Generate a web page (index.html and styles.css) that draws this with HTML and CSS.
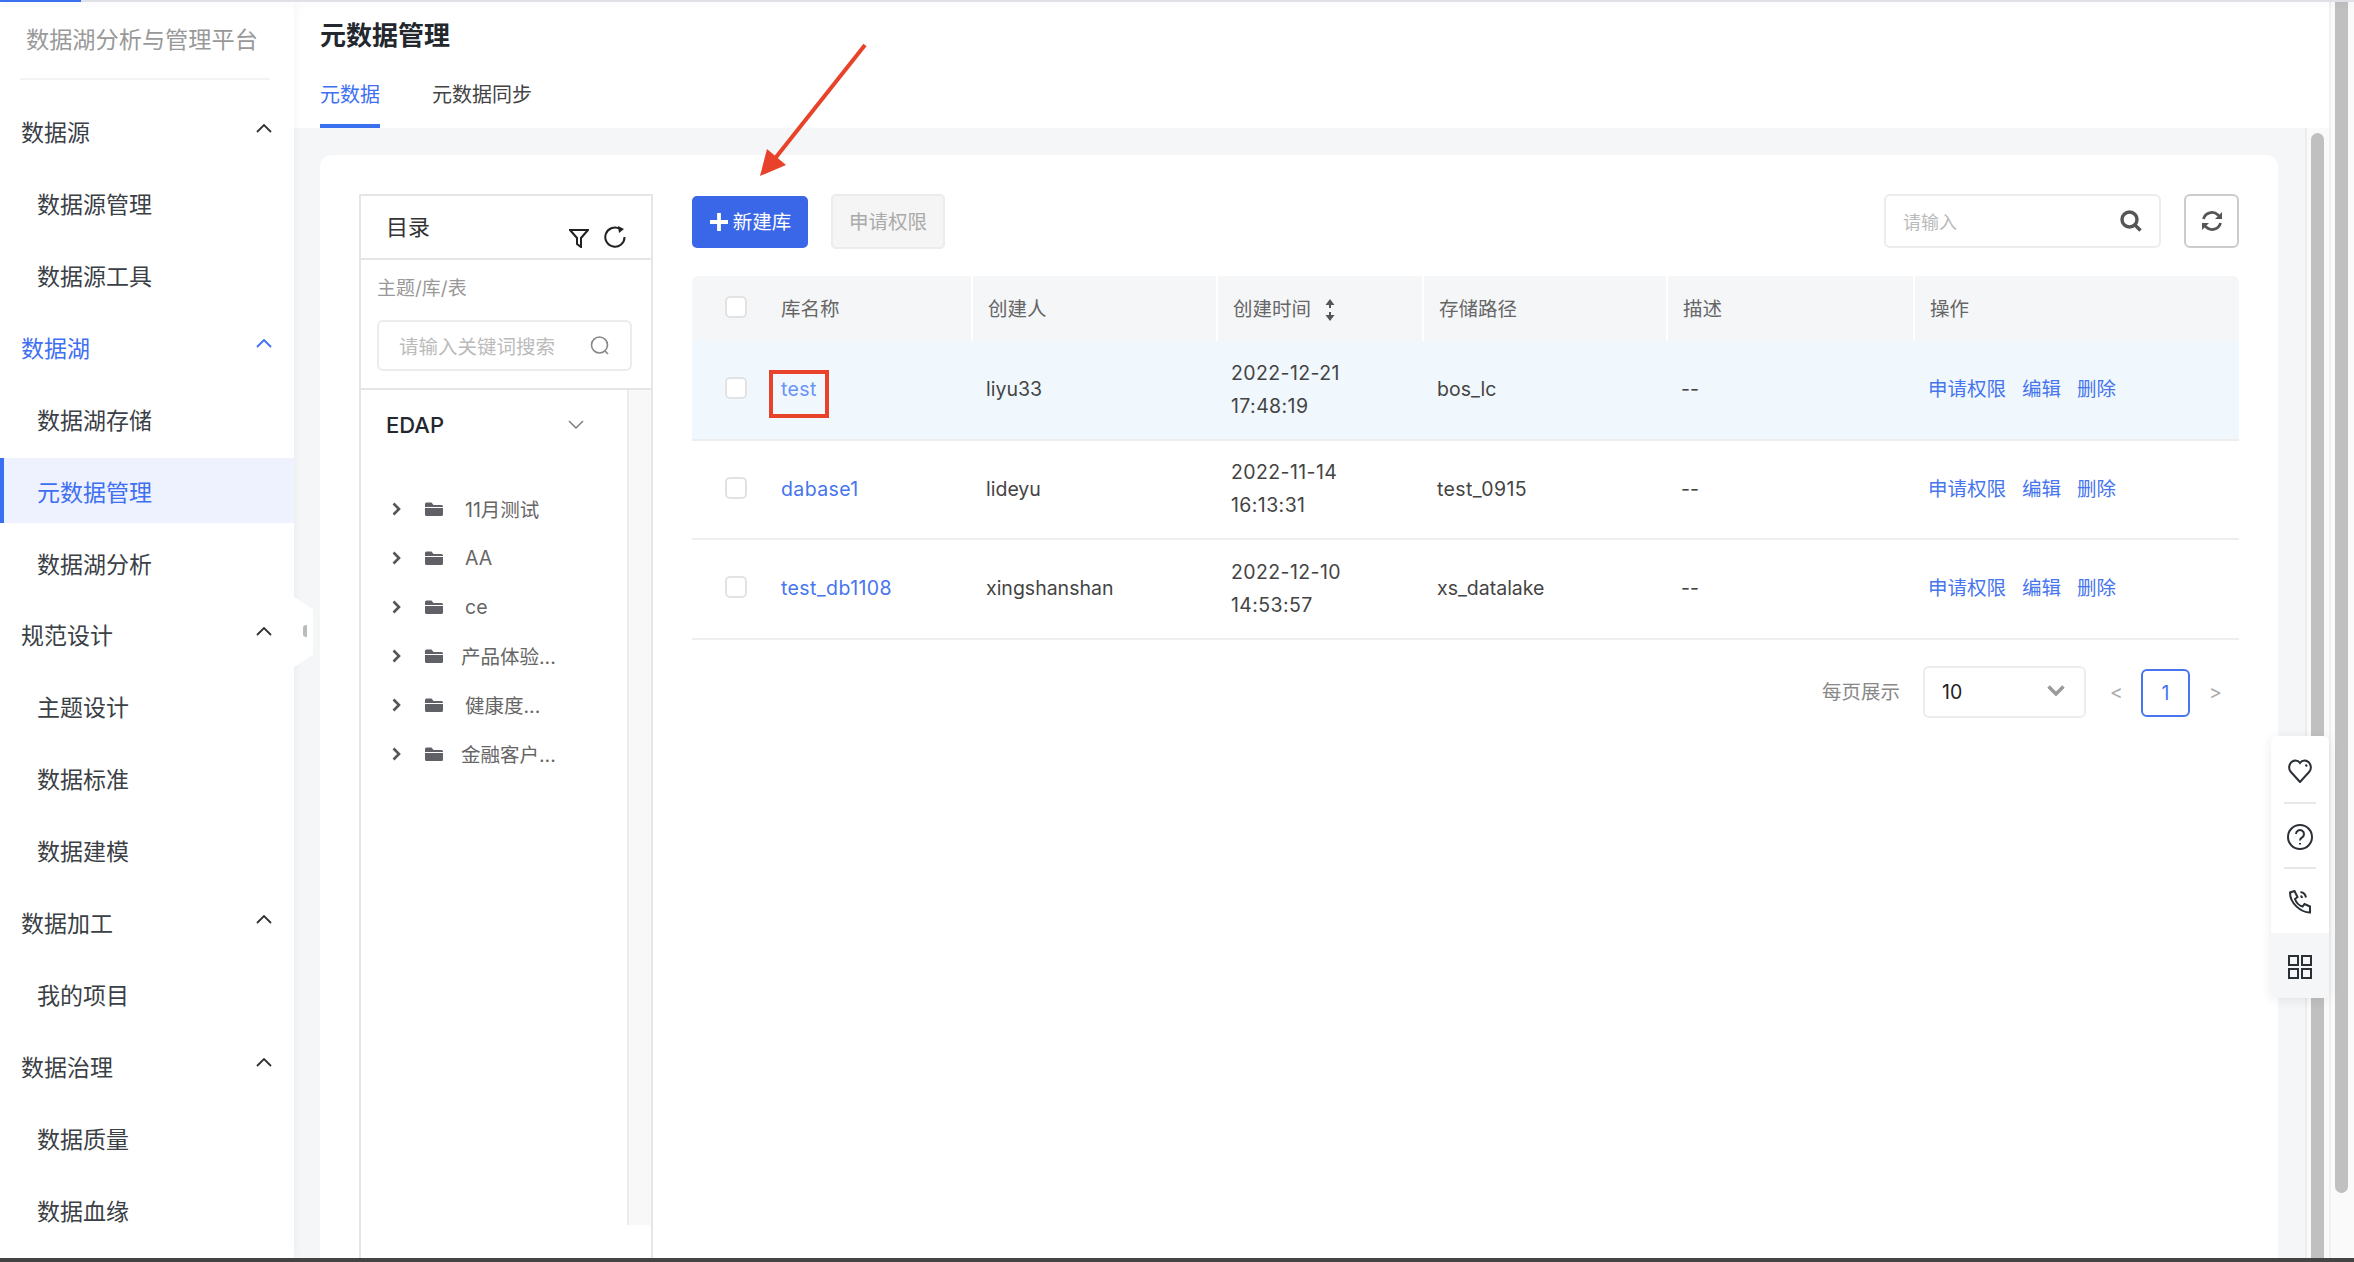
FILE: index.html
```html
<!DOCTYPE html>
<html lang="zh-CN">
<head>
    <meta charset="UTF-8">
    <title>元数据管理</title>
    <link rel="stylesheet" href="styles.css">
</head>
<body>
    <div class="topline"><div class="topline-progress"></div></div>
    <div class="shell">
        <aside class="sidebar">
            <div class="brand"><span>数据湖分析与管理平台</span></div>
            <nav class="nav">
                <div class="nav-group">数据源<svg class="nav-arrow" viewBox="0 0 16 9"><path d="M1 8 8 1l7 7"/></svg></div>
                <div class="nav-item">数据源管理</div>
                <div class="nav-item">数据源工具</div>
                <div class="nav-group nav-group-open">数据湖<svg class="nav-arrow" viewBox="0 0 16 9"><path d="M1 8 8 1l7 7"/></svg></div>
                <div class="nav-item">数据湖存储</div>
                <div class="nav-item nav-item-active">元数据管理</div>
                <div class="nav-item">数据湖分析</div>
                <div class="nav-group">规范设计<svg class="nav-arrow" viewBox="0 0 16 9"><path d="M1 8 8 1l7 7"/></svg></div>
                <div class="nav-item">主题设计</div>
                <div class="nav-item">数据标准</div>
                <div class="nav-item">数据建模</div>
                <div class="nav-group">数据加工<svg class="nav-arrow" viewBox="0 0 16 9"><path d="M1 8 8 1l7 7"/></svg></div>
                <div class="nav-item">我的项目</div>
                <div class="nav-group">数据治理<svg class="nav-arrow" viewBox="0 0 16 9"><path d="M1 8 8 1l7 7"/></svg></div>
                <div class="nav-item">数据质量</div>
                <div class="nav-item">数据血缘</div>
            </nav>
            <div class="collapse-handle"><span class="collapse-mark"></span></div>
        </aside>

        <main class="main">
            <header class="page-header">
                <h1 class="page-title">元数据管理</h1>
                <div class="tabs">
                    <div class="tab tab-active">元数据</div>
                    <div class="tab">元数据同步</div>
                </div>
            </header>
            <div class="page-body">
                <div class="content">
                    <div class="card">
                        <section class="tree-panel">
                            <div class="tree-head">
                                <span class="tree-title">目录</span>
                                <svg class="icon-filter" viewBox="0 0 20 20"><path d="M1 2h18l-7 8v9l-4-3v-6z"/></svg>
                                <svg class="icon-reload" viewBox="0 0 22 23"><path d="M16 4a9.6 9.6 0 1 0 4.5 8"/><path class="icon-solid" d="M14 1l6 3-5 4z"/></svg>
                            </div>
                            <div class="tree-search">
                                <div class="tree-search-label">主题/库/表</div>
                                <div class="tree-input">
                                    <span>请输入关键词搜索</span>
                                    <svg viewBox="0 0 20 20"><circle cx="9.5" cy="9" r="8"/><path d="M15 15l3 3"/></svg>
                                </div>
                            </div>
                            <div class="tree-body">
                                <div class="tree-list">
                                    <div class="tree-root">
                                        <span>EDAP</span>
                                        <svg viewBox="0 0 16 9"><path d="M1 1l7 7 7-7"/></svg>
                                    </div>
                                    <div class="tree-node">
                                        <svg class="tree-arrow" viewBox="0 0 9 14"><path d="M1.5 1.5 7 7l-5.500 5.500"/></svg>
                                        <svg class="tree-folder" viewBox="0 0 18 14"><path d="M0 2a1.500 1.500 0 0 1 1.500-1.500h5L8.500 3H16.500A1.500 1.500 0 0 1 18 4.500V5H0zM0 6h18v6.500a1.500 1.500 0 0 1-1.500 1.500h-15A1.500 1.500 0 0 1 0 12.500z"/></svg>
                                        <span class="tree-label">11月测试</span>
                                    </div>
                                    <div class="tree-node">
                                        <svg class="tree-arrow" viewBox="0 0 9 14"><path d="M1.5 1.5 7 7l-5.500 5.500"/></svg>
                                        <svg class="tree-folder" viewBox="0 0 18 14"><path d="M0 2a1.500 1.500 0 0 1 1.500-1.500h5L8.500 3H16.500A1.500 1.500 0 0 1 18 4.500V5H0zM0 6h18v6.500a1.500 1.500 0 0 1-1.500 1.500h-15A1.500 1.500 0 0 1 0 12.500z"/></svg>
                                        <span class="tree-label">AA</span>
                                    </div>
                                    <div class="tree-node">
                                        <svg class="tree-arrow" viewBox="0 0 9 14"><path d="M1.5 1.5 7 7l-5.500 5.500"/></svg>
                                        <svg class="tree-folder" viewBox="0 0 18 14"><path d="M0 2a1.500 1.500 0 0 1 1.500-1.500h5L8.500 3H16.500A1.500 1.500 0 0 1 18 4.500V5H0zM0 6h18v6.500a1.500 1.500 0 0 1-1.500 1.500h-15A1.500 1.500 0 0 1 0 12.500z"/></svg>
                                        <span class="tree-label">ce</span>
                                    </div>
                                    <div class="tree-node">
                                        <svg class="tree-arrow" viewBox="0 0 9 14"><path d="M1.5 1.5 7 7l-5.500 5.500"/></svg>
                                        <svg class="tree-folder" viewBox="0 0 18 14"><path d="M0 2a1.500 1.500 0 0 1 1.500-1.500h5L8.500 3H16.500A1.500 1.500 0 0 1 18 4.500V5H0zM0 6h18v6.500a1.500 1.500 0 0 1-1.500 1.500h-15A1.500 1.500 0 0 1 0 12.500z"/></svg>
                                        <span class="tree-label tree-label-long">产品体验...</span>
                                    </div>
                                    <div class="tree-node">
                                        <svg class="tree-arrow" viewBox="0 0 9 14"><path d="M1.5 1.5 7 7l-5.500 5.500"/></svg>
                                        <svg class="tree-folder" viewBox="0 0 18 14"><path d="M0 2a1.500 1.500 0 0 1 1.500-1.500h5L8.500 3H16.500A1.500 1.500 0 0 1 18 4.500V5H0zM0 6h18v6.500a1.500 1.500 0 0 1-1.500 1.500h-15A1.500 1.500 0 0 1 0 12.500z"/></svg>
                                        <span class="tree-label">健康度...</span>
                                    </div>
                                    <div class="tree-node">
                                        <svg class="tree-arrow" viewBox="0 0 9 14"><path d="M1.5 1.5 7 7l-5.500 5.500"/></svg>
                                        <svg class="tree-folder" viewBox="0 0 18 14"><path d="M0 2a1.500 1.500 0 0 1 1.500-1.500h5L8.500 3H16.500A1.500 1.500 0 0 1 18 4.500V5H0zM0 6h18v6.500a1.500 1.500 0 0 1-1.500 1.500h-15A1.500 1.500 0 0 1 0 12.500z"/></svg>
                                        <span class="tree-label tree-label-long">金融客户...</span>
                                    </div>
                                </div>
                                <div class="tree-gutter"></div>
                            </div>
                        </section>

                        <section class="db-panel">
                            <div class="toolbar">
                                <button class="btn btn-primary"><svg viewBox="0 0 20 20"><path d="M10 1v18M1 10h18"/></svg>新建库</button>
                                <button class="btn btn-disabled">申请权限</button>
                                <div class="search-box">
                                    <span>请输入</span>
                                    <svg viewBox="0 0 22 22"><circle cx="9.500" cy="9.500" r="7.500"/><path d="M15 15l5.500 5.500"/></svg>
                                </div>
                                <button class="btn-refresh">
                                    <svg viewBox="0 0 22 22"><path d="M2.500 9A8.700 8.700 0 0 1 17 5l2 2.500"/><path d="M19.500 13A8.700 8.700 0 0 1 5 17l-2-2.500"/><path class="icon-solid" d="M21 2v7h-7zM1 20v-7h7z"/></svg>
                                </button>
                            </div>
                            <table class="db-table">
                                <colgroup>
                                    <col class="col-name"><col class="col-owner"><col class="col-time"><col class="col-path"><col class="col-desc"><col class="col-ops">
                                </colgroup>
                                <thead>
                                    <tr>
                                        <th><span class="name-cell"><span class="checkbox"></span>库名称</span></th>
                                        <th>创建人</th>
                                        <th>创建时间<svg class="sort-icon" viewBox="0 0 10 22"><path d="M5 2v7M5 13v7"/><path class="icon-solid" d="M5 0l4.500 6h-9zM5 22l4.500-6h-9z"/></svg></th>
                                        <th>存储路径</th>
                                        <th>描述</th>
                                        <th>操作</th>
                                    </tr>
                                </thead>
                                <tbody>
                                    <tr class="row-hover">
                                        <td><span class="name-cell"><span class="checkbox"></span><a class="link wide-text">test</a></span></td>
                                        <td>liyu33</td>
                                        <td class="wide-text">2022-12-21<br>17:48:19</td>
                                        <td>bos_lc</td>
                                        <td>--</td>
                                        <td><span class="ops"><a class="link">申请权限</a><a class="link">编辑</a><a class="link">删除</a></span></td>
                                    </tr>
                                    <tr>
                                        <td><span class="name-cell"><span class="checkbox"></span><a class="link wide-text">dabase1</a></span></td>
                                        <td>lideyu</td>
                                        <td class="wide-text">2022-11-14<br>16:13:31</td>
                                        <td class="wide-text">test_0915</td>
                                        <td>--</td>
                                        <td><span class="ops"><a class="link">申请权限</a><a class="link">编辑</a><a class="link">删除</a></span></td>
                                    </tr>
                                    <tr>
                                        <td><span class="name-cell"><span class="checkbox"></span><a class="link wide-text">test_db1108</a></span></td>
                                        <td>xingshanshan</td>
                                        <td class="wide-text">2022-12-10<br>14:53:57</td>
                                        <td>xs_datalake</td>
                                        <td>--</td>
                                        <td><span class="ops"><a class="link">申请权限</a><a class="link">编辑</a><a class="link">删除</a></span></td>
                                    </tr>
                                </tbody>
                            </table>
                            <div class="pager">
                                <span class="pager-label">每页展示</span>
                                <div class="pager-select">
                                    <span>10</span>
                                    <svg viewBox="0 0 18 11"><path d="M1.500 1.500 9 9l7.500-7.500"/></svg>
                                </div>
                                <span class="pager-arrow">&lt;</span>
                                <span class="pager-page">1</span>
                                <span class="pager-arrow">&gt;</span>
                            </div>
                        </section>
                    </div>
                </div>
                <div class="scroll-gutter"><div class="scroll-thumb"></div></div>
            </div>

            <div class="float-bar">
                <div class="float-item">
                    <svg viewBox="0 0 24 24"><path d="M12 23 2.500 12.500C-.500 8.500 2 1.500 7.500 1.500c2 0 3.500 1 4.500 2.500 1-1.500 2.500-2.500 4.500-2.500 5.500 0 8 7 5 11z"/><path d="M17.500 5.500l1.500 2"/></svg>
                </div>
                <div class="float-item">
                    <svg class="icon-help" viewBox="0 0 26 26"><circle cx="13" cy="13" r="12"/><path d="M9 10a4 4 0 1 1 6 3.500c-1.300.7-2 1.500-2 3"/><path d="M13 19v1.500"/></svg>
                </div>
                <div class="float-item">
                    <svg viewBox="0 0 24 24"><path d="M2 2.500 6.500 1l3 6-2.500 2c1 3 4 6.500 7.500 7.500l2-2.500 5.500 2.500v6c-9 0-20-9-20-20z"/><path d="M12.500 2c3 .5 5 2.500 5.500 5.500"/><path d="M12.500 6c1 .3 1.500 1 1.800 1.800"/></svg>
                </div>
                <div class="float-item float-item-active">
                    <svg viewBox="0 0 24 24"><path d="M1 1h9v9H1zM14 1h9v9h-9zM1 14h9v9H1zM14 14h9v9h-9z"/></svg>
                </div>
            </div>

            <!-- annotations drawn on top of the screenshot -->
            <svg class="note-arrow" viewBox="0 0 110 135">
                <path d="M106 2 14 118" class="note-line"/>
                <path d="M1 133 8 106 27 122z" class="note-head"/>
            </svg>
            <div class="note-box"></div>
        </main>

        <div class="window-scroll"><div class="window-thumb"></div></div>
    </div>
    <div class="bottom-bar"></div>
</body>
</html>
```

FILE: styles.css
```css
* {
    box-sizing: border-box;
}
body {
    margin: 0;
    height: 1262px;
    overflow: hidden;
    display: flex;
    flex-direction: column;
    font-family: Inter, "Noto Sans CJK SC", sans-serif;
    font-size: 19.5px;
    color: #333;
    background-color: #fff;
}
svg {
    display: block;
    flex: none;
    fill: none;
}
.icon-solid {
    stroke: none !important;
    fill: currentColor;
}

.topline {
    height: 2px;
    background-color: #dfe1e4;
    box-shadow: 0 2px 8px rgba(0,0,0,0.08);
    position: relative;
    z-index: 3;
}
.topline-progress {
    width: 81px;
    height: 2px;
    background-color: #3a6ff0;
}
.bottom-bar {
    height: 4px;
    background-color: #444;
}
.shell {
    flex: 1;
    display: flex;
    min-height: 0;
}

/* sidebar */
.sidebar {
    width: 294px;
    flex: none;
    position: relative;
    z-index: 2;
    background-color: #fff;
    box-shadow: 0 0 10px rgba(0,0,0,0.05);
}
.brand {
    height: 78px;
    margin: 0 24px 0 20px;
    padding: 22px 0 0 6px;
    font-size: 23.2px;
    line-height: 32px;
    color: #999;
    border-bottom: 2px solid #f3f3f3;
    white-space: nowrap;
}
.nav {
    padding-top: 18.500px;
}
.nav-group,
.nav-item {
    height: 65px;
    margin-bottom: 6.930px;
    display: flex;
    align-items: center;
    font-size: 23px;
    color: #3b3f46;
}
.nav-group {
    padding: 0 22px 0 21px;
    justify-content: space-between;
}
.nav-item {
    padding-left: 37px;
}
.nav-arrow {
    width: 16px;
    height: 9px;
    margin-top: -6px;
    stroke: #333;
    stroke-width: 1.800;
}
.nav-group-open {
    color: #3f6ff2;
}
.nav-group-open .nav-arrow {
    stroke: #3f6ff2;
}
.nav-item-active {
    color: #3f6ff2;
    background-color: #eef2fe;
    border-left: 4px solid #3a6ff0;
    padding-left: 33px;
}
.collapse-handle {
    position: absolute;
    left: 100%;
    top: 595px;
    width: 19px;
    height: 70px;
    background-color: #fff;
    clip-path: polygon(0 0, 100% 12px, 100% 58px, 0 100%);
}
.collapse-mark {
    position: absolute;
    left: 9px;
    top: 28px;
    width: 4px;
    height: 12px;
    background-color: #bbb;
    border-radius: 3px 0 0 3px;
}

/* main column */
.main {
    flex: 1;
    min-width: 0;
    display: flex;
    flex-direction: column;
    position: relative;
}
.page-header {
    height: 126px;
    padding-left: 26px;
    background-color: #fff;
}
.page-title {
    margin: 0;
    padding-top: 15px;
    font-size: 26px;
    line-height: 38px;
    font-weight: 600;
    color: #23272e;
}
.tabs {
    display: flex;
    gap: 52px;
    margin-top: 18px;
}
.tab {
    height: 55px;
    padding-top: 8px;
    font-size: 20px;
    line-height: 28px;
    color: #444;
}
.tab-active {
    color: #3f6ff2;
    border-bottom: 4px solid #3a6ff0;
}
.page-body {
    flex: 1;
    min-height: 0;
    display: flex;
}
.content {
    flex: 1;
    min-width: 0;
    padding: 27px 27px 0 26px;
    background-color: #f5f6f8;
}
.scroll-gutter {
    width: 24px;
    flex: none;
    padding: 5px 5px 0 4px;
    background-color: #fafafa;
    border-left: 2px solid #ececec;
    overflow: hidden;
}
.scroll-thumb {
    width: 13px;
    height: 1200px;
    background-color: #c0c0c0;
    border-radius: 7px;
}
.window-scroll {
    width: 25px;
    flex: none;
    padding-left: 4px;
    background-color: #fafafa;
    border-left: 2px solid #f0f0f0;
}
.window-thumb {
    width: 13px;
    height: 1191px;
    background-color: #c0c0c0;
    border-radius: 0 0 7px 7px;
}
.card {
    height: 100%;
    display: flex;
    gap: 39px;
    padding: 39px 39px 0 39px;
    background-color: #fff;
    border-radius: 12px 12px 0 0;
}

/* directory tree */
.tree-panel {
    width: 294px;
    flex: none;
    display: flex;
    flex-direction: column;
    border: 2px solid #e6e6e6;
    border-bottom: none;
}
.tree-head {
    height: 64px;
    flex: none;
    display: flex;
    align-items: flex-start;
    padding: 15.500px 25px 0 25px;
    border-bottom: 2px solid #e6e6e6;
}
.tree-title {
    flex: 1;
    font-size: 22px;
    line-height: 30px;
    color: #333;
}
.icon-filter {
    width: 20px;
    height: 20px;
    margin-top: 16px;
    stroke: #222;
    stroke-width: 2;
}
.icon-reload {
    width: 22px;
    height: 23px;
    margin: 13px 0 0 15px;
    color: #222;
    stroke: #222;
    stroke-width: 2;
}
.tree-search {
    height: 130px;
    flex: none;
    padding: 15px 19px 0 16px;
    border-bottom: 2px solid #e6e6e6;
}
.tree-search-label {
    font-size: 19px;
    line-height: 28px;
    color: #999;
}
.tree-input {
    height: 51px;
    margin-top: 17px;
    display: flex;
    align-items: center;
    justify-content: space-between;
    padding: 0 20px 0 20px;
    font-size: 19.500px;
    color: #bbb;
    border: 2px solid #ececec;
    border-radius: 6px;
}
.tree-input svg {
    width: 20px;
    height: 20px;
    stroke: #888;
    stroke-width: 1.600;
}
.tree-body {
    flex: 1;
    min-height: 0;
    display: flex;
}
.tree-list {
    flex: 1;
    min-width: 0;
    padding-left: 25px;
}
.tree-root {
    height: 69px;
    display: flex;
    align-items: center;
    justify-content: space-between;
    padding-right: 43px;
    font-size: 22px;
    font-weight: 500;
    color: #23272e;
}
.tree-root svg {
    width: 16px;
    height: 9px;
    stroke: #777;
    stroke-width: 1.400;
}
.tree-node {
    height: 49px;
    display: flex;
    align-items: center;
    font-size: 19.500px;
    color: #666;
}
.tree-root + .tree-node {
    margin-top: 25px;
}
.tree-arrow {
    width: 9px;
    height: 14px;
    margin-left: 6px;
    stroke: #555;
    stroke-width: 2.600;
}
.tree-folder {
    width: 18px;
    height: 14px;
    margin-left: 24px;
    fill: #5f6166;
}
.tree-label {
    margin-left: 22px;
}
.tree-label-long {
    margin-left: 18px;
}
.tree-gutter {
    width: 24px;
    flex: none;
    height: 835px;
    background-color: #f8f8f8;
    border-left: 2px solid #ececec;
}

/* database table */
.db-panel {
    flex: 1;
    min-width: 0;
}
.toolbar {
    height: 82px;
    display: flex;
    align-items: flex-start;
}
.btn {
    height: 52px;
    margin-top: 2px;
    padding: 0 0 3px;
    display: flex;
    align-items: center;
    justify-content: center;
    font: inherit;
    border-radius: 5px;
    border: none;
}
.btn-primary {
    width: 116px;
    gap: 4px;
    color: #fff;
    background-color: #3a66e8;
}
.btn-primary svg {
    width: 20px;
    height: 20px;
    margin-top: 2px;
    stroke: #fff;
    stroke-width: 3.800;
}
.btn-disabled {
    width: 114px;
    height: 55px;
    margin: 0 0 0 23px;
    color: #aaa;
    background-color: #f5f5f5;
    border: 2px solid #ececec;
}
.search-box {
    width: 277px;
    height: 54px;
    margin-left: auto;
    display: flex;
    align-items: center;
    justify-content: space-between;
    padding: 0 17px 0 17px;
    font-size: 18px;
    color: #bbb;
    border: 2px solid #ececec;
    border-radius: 6px;
}
.search-box svg {
    width: 22px;
    height: 22px;
    stroke: #555;
    stroke-width: 3.400;
}
.btn-refresh {
    width: 55px;
    height: 54px;
    margin-left: 23px;
    display: flex;
    align-items: center;
    justify-content: center;
    background-color: #fff;
    border: 2px solid #ccc;
    border-radius: 6px;
}
.btn-refresh svg {
    width: 22px;
    height: 22px;
    color: #555;
    stroke: #555;
    stroke-width: 2.800;
}
.db-table {
    width: 100%;
    table-layout: fixed;
    border-collapse: separate;
    border-spacing: 0;
}
.col-name { width: 279px; }
.col-owner { width: 245px; }
.col-time { width: 206px; }
.col-path { width: 244px; }
.col-desc { width: 247px; }
.col-ops { width: 326px; }
.db-table th {
    height: 65px;
    padding: 0 0 3px 15px;
    text-align: left;
    font-weight: 400;
    color: #666;
    background-color: #f5f6f8;
    border-left: 2px solid #fff;
}
.db-table th:first-child {
    padding-left: 33px;
    border-left: none;
    border-radius: 6px 0 0 0;
}
.db-table th:last-child {
    border-radius: 0 6px 0 0;
}
.db-table td {
    height: 99.500px;
    padding: 0 0 0 15px;
    line-height: 33px;
    color: #444;
    border-bottom: 2px solid #eeeeee;
}
.db-table td:first-child {
    padding-left: 33px;
}
.db-table td.wide-text,
.wide-text {
    letter-spacing: 0.4px;
}
.row-hover td {
    background-color: #f1f8fd;
}
.name-cell {
    display: flex;
    align-items: center;
    gap: 34px;
}
.checkbox {
    width: 22px;
    height: 22px;
    flex: none;
    background-color: #fff;
    border: 2px solid #e2e2e2;
    border-radius: 5px;
}
td .checkbox {
    margin-top: -3px;
}
.link {
    color: #4675ee;
}
.row-hover .name-cell .link {
    color: #6a93f8;
}
.ops {
    display: flex;
    gap: 16px;
}
.sort-icon {
    display: inline-block;
    width: 10px;
    height: 22px;
    margin-left: 14px;
    vertical-align: -5px;
    color: #555;
    stroke: #555;
    stroke-width: 2;
}
.pager {
    height: 52px;
    margin-top: 26px;
    padding-right: 18px;
    display: flex;
    align-items: center;
    justify-content: flex-end;
}
.pager-label {
    color: #888;
    margin-top: -2px;
}
.pager-select {
    width: 163px;
    height: 52px;
    margin-left: 23px;
    margin-right: 24px;
    display: flex;
    align-items: center;
    justify-content: space-between;
    padding: 0 19px 0 17px;
    color: #222;
    border: 2px solid #ececec;
    border-radius: 6px;
}
.pager-select svg {
    width: 18px;
    height: 11px;
    margin-top: -3px;
    stroke: #999;
    stroke-width: 3.400;
}
.pager-arrow {
    color: #aaa;
    width: 12px;
}
.pager-page {
    width: 49px;
    height: 48px;
    margin: 2px 19px 0 19px;
    display: flex;
    align-items: center;
    justify-content: center;
    color: #4675ee;
    border: 2px solid #4675ee;
    border-radius: 6px;
}

/* floating tools */
.float-bar {
    position: absolute;
    top: 734px;
    right: 0;
    width: 58px;
    background-color: #fff;
    border-radius: 6px;
    box-shadow: 0 2px 12px rgba(0,0,0,0.08);
    overflow: hidden;
}
.float-item {
    height: 65.500px;
    position: relative;
    display: flex;
    align-items: center;
    justify-content: center;
}
.float-item + .float-item::before {
    content: "";
    position: absolute;
    top: 0;
    left: 13px;
    right: 13px;
    height: 2px;
    background-color: #e8e8e8;
}
.float-item-active {
    background-color: #f5f6f8;
}
.float-item-active::before {
    display: none;
}
.float-item svg {
    width: 24px;
    height: 24px;
    margin-top: 5px;
    stroke: #2b2f36;
    stroke-width: 2;
}
.float-item .icon-help {
    width: 26px;
    height: 26px;
}
.float-item-active svg {
    margin-top: 3px;
}

/* red annotations */
.note-arrow {
    position: absolute;
    left: 465px;
    top: 41px;
    width: 110px;
    height: 135px;
}
.note-line {
    stroke: #e8432a;
    stroke-width: 4;
}
.note-head {
    fill: #e8432a;
}
.note-box {
    position: absolute;
    left: 475px;
    top: 368px;
    width: 60px;
    height: 48px;
    border: 4px solid #e8432a;
}
```
